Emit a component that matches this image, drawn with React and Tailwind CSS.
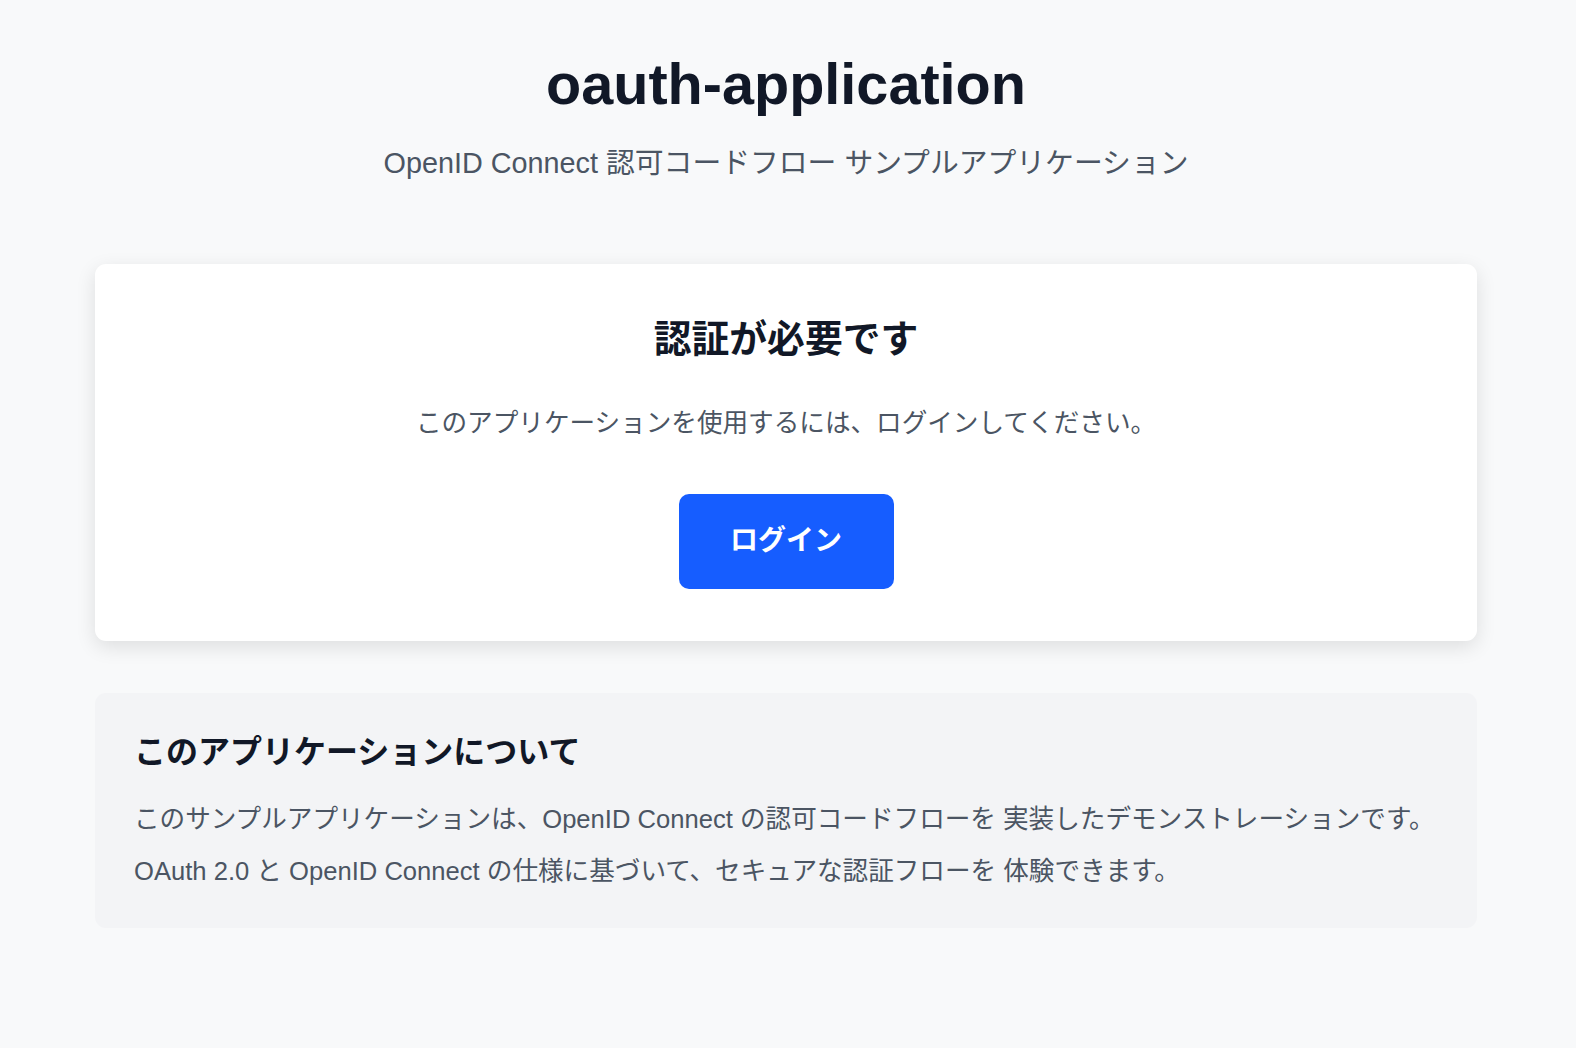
const fontStack =
  "font-['Liberation_Sans','Noto_Sans_CJK_JP',sans-serif]";

const App = () => {
  return (
    <div className={`min-h-screen bg-[#f8f9fa] pr-[4px] ${fontStack}`}>
      <div className="max-w-[1382px] mx-auto pt-[56px] pb-16">
        {/* Header */}
        <header className="text-center mb-[82px]">
          <h1 className="text-[57.6px] leading-none font-bold text-[#111827] mb-[30px]">
            oauth-application
          </h1>
          <p className="text-[28.8px] leading-[38px] text-[#4b5563]">
            OpenID Connect 認可コードフロー サンプルアプリケーション
          </p>
        </header>

        {/* Login card */}
        <div className="bg-white rounded-[11px] shadow-[0_6px_20px_rgba(0,0,0,0.11)] pt-[48px] pb-[52px] px-10 flex flex-col items-center text-center">
          <h2 className="text-[37.8px] leading-[54px] font-bold text-[#111827]">
            認証が必要です
          </h2>
          <p className="mt-[39px] text-[25.6px] leading-[36px] text-[#4b5563]">
            このアプリケーションを使用するには、ログインしてください。
          </p>
          <button
            type="button"
            className="mt-[53px] w-[215px] h-[95px] bg-[#165dff] hover:bg-[#0e4ee6] text-white text-[28px] font-bold rounded-[10px] cursor-pointer"
          >
            ログイン
          </button>
        </div>

        {/* About */}
        <div className="mt-[52px] bg-[#f3f4f6] rounded-[11px] pt-[39px] pb-[39px] px-[39px]">
          <h3 className="text-[32px] leading-[40px] font-bold text-[#111827]">
            このアプリケーションについて
          </h3>
          <p className="mt-[29px] text-[25.6px] leading-[36px] text-[#4b5563] whitespace-nowrap">
            このサンプルアプリケーションは、OpenID Connect の認可コードフローを 実装したデモンストレーションです。
          </p>
          <p className="mt-[16px] text-[25.6px] leading-[36px] text-[#4b5563] whitespace-nowrap">
            OAuth 2.0 と OpenID Connect の仕様に基づいて、セキュアな認証フローを 体験できます。
          </p>
        </div>
      </div>
    </div>
  );
};

export default App;
